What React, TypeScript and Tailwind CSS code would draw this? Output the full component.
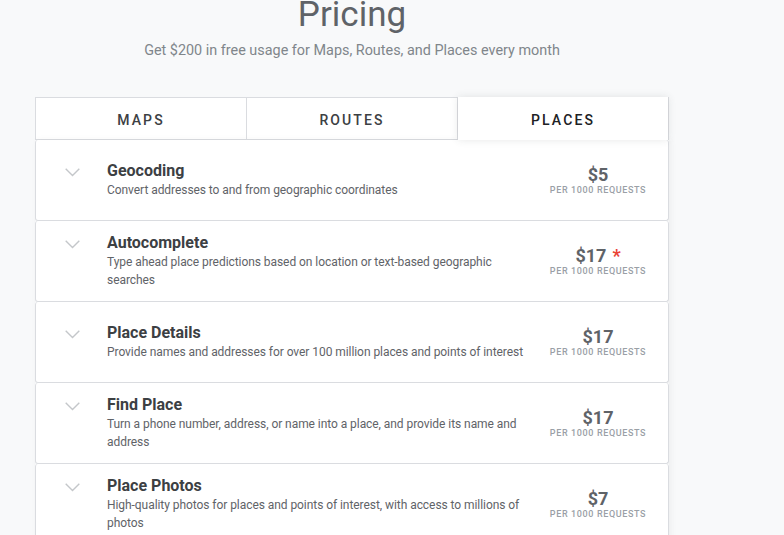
import React from 'react';

const apis = [
    { name: 'Geocoding', desc: 'Convert addresses to and from geographic coordinates', price: '$5' },
    { name: 'Autocomplete', desc: 'Type ahead place predictions based on location or text-based geographic searches', price: '$17', star: true },
    { name: 'Place Details', desc: 'Provide names and addresses for over 100 million places and points of interest', price: '$17' },
    { name: 'Find Place', desc: 'Turn a phone number, address, or name into a place, and provide its name and address', price: '$17' },
    { name: 'Place Photos', desc: 'High-quality photos for places and points of interest, with access to millions of photos', price: '$7' },
];

function Chevron() {
    return (
        <svg width="15" height="9" viewBox="0 0 15 9" className="shrink-0">
            <path d="M0.7 0.7 L7.5 7.5 L14.3 0.7" fill="none" stroke="#c4c7ca" strokeWidth="1.4" />
        </svg>
    );
}

export default function App() {
    return (
        <div className="min-h-screen bg-[#f8f9fa] font-['Roboto',sans-serif] overflow-hidden">
            <div className="ml-[35px] w-[634px]">
                <h1 className="text-center text-[35px] leading-[44px] text-[#5f6368] -mt-[7px]">Pricing</h1>
                <p className="text-center text-[14.4px] leading-5 text-[#80868b] mt-[4px]">
                    Get $200 in free usage for Maps, Routes, and Places every month
                </p>

                <div className="mt-[36px] flex h-[43px] border border-[#dadce0] bg-white">
                    <button className="flex-1 border-r border-[#dadce0] pt-[4px] text-[14px] font-medium tracking-[0.15em] text-[#3c4043]">MAPS</button>
                    <button className="flex-1 border-r border-[#dadce0] pt-[4px] text-[14px] font-medium tracking-[0.15em] text-[#3c4043]">ROUTES</button>
                    <button className="relative flex-1 -mb-px -mt-px bg-white pt-[4px] text-[14px] font-medium tracking-[0.15em] text-[#202124] shadow-[0_0_8px_rgba(60,64,67,0.12)]">PLACES</button>
                </div>

                <div className="shadow-[2px_0_6px_rgba(60,64,67,0.06)]">
                    {apis.map((api) => (
                        <div
                            key={api.name}
                            className="flex h-[81px] items-center rounded-[3px] border border-t-0 border-[#dadce0] bg-white pl-[29px] pr-[21px]"
                        >
                            <div className="flex flex-1 items-start">
                                <div className="mt-[6px] w-[42px]">
                                    <Chevron />
                                </div>
                                <div className="w-[424px] -mt-px">
                                    <h3 className="text-[16px] leading-5 font-bold text-[#3c4043]">{api.name}</h3>
                                    <p className="text-[12px] leading-[18px] tracking-[-0.005em] text-[#5f6368]">{api.desc}</p>
                                </div>
                            </div>
                            <div className="flex w-[98px] flex-col items-center">
                                <div className="text-[18px] leading-[20px] font-bold text-[#5f6368]">
                                    {api.price}
                                    {api.star && <span className="ml-[6px] text-[#ea4335]">*</span>}
                                </div>
                                <div className="whitespace-nowrap text-[9px] leading-[10px] font-medium tracking-[0.07em] text-[#9aa0a6]">
                                    PER 1000 REQUESTS
                                </div>
                            </div>
                        </div>
                    ))}
                </div>
            </div>
        </div>
    );
}
